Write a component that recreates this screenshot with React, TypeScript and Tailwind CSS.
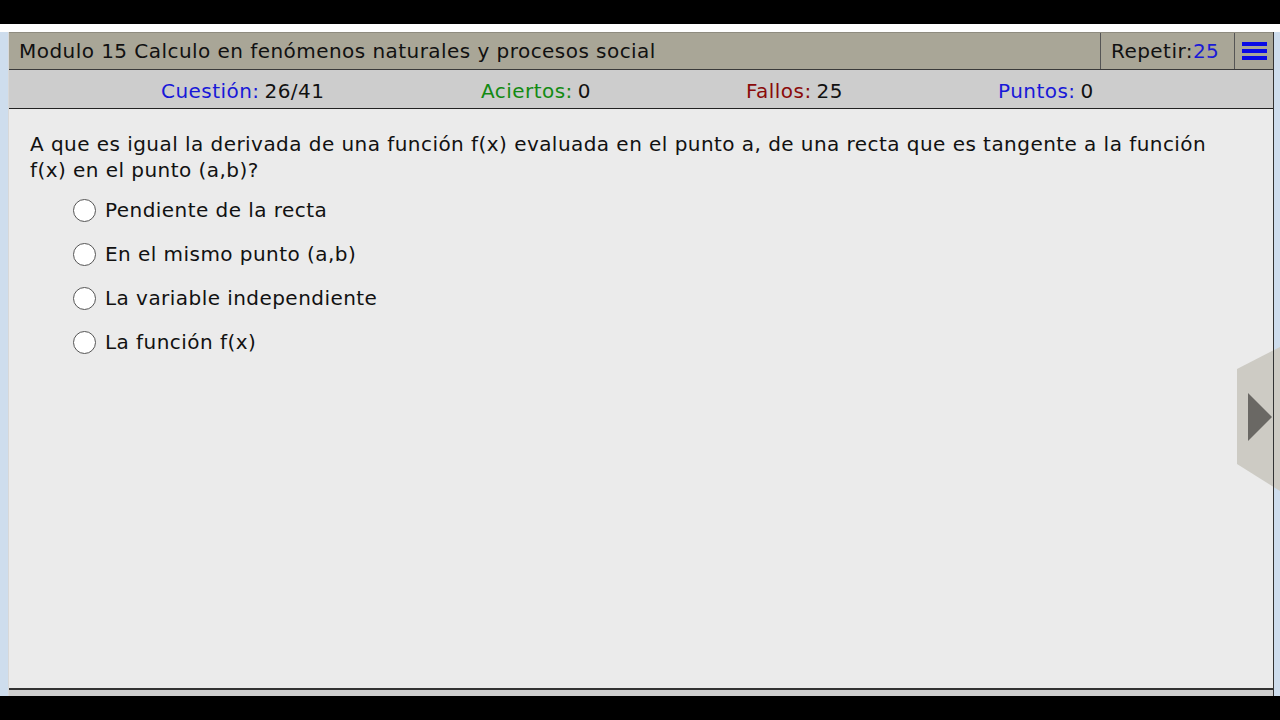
import React from "react";

const options = [
  "Pendiente de la recta",
  "En el mismo punto (a,b)",
  "La variable independiente",
  "La función f(x)",
];

export default function App() {
  return (
    <div className="w-[1280px] h-[720px] bg-black flex flex-col overflow-hidden tracking-[0.45px]" style={{ fontFamily: '"DejaVu Sans", Verdana, sans-serif' }}>
      <div className="h-[24px] shrink-0" />
      <div className="h-[8px] shrink-0 bg-white" />
      <div className="flex flex-1 min-h-0 bg-[#cedded]">
        <div className="w-[8px] shrink-0" />
        <div className="relative flex-1 flex flex-col bg-[#ebebeb] border-l border-[#d8d8d8]">
          {/* header */}
          <div className="h-[38px] shrink-0 flex bg-[#a9a697] border-t border-[#8f8c80] border-b border-b-[#3a3a3a] text-[20px] text-[#111]">
            <div className="flex-1 flex items-center pl-[10px]">Modulo 15 Calculo en fenómenos naturales y procesos social</div>
            <div className="w-[134px] flex items-center pl-[10px] border-l border-[#555]">
              Repetir:<span className="text-[#1a1ad6]">25</span>
            </div>
            <div className="w-[40px] flex items-center justify-center border-l border-[#555]">
              <div className="flex flex-col gap-[3px] w-[25px]">
                <div className="h-[4px] bg-[#0a0ae6]" />
                <div className="h-[4px] bg-[#0a0ae6]" />
                <div className="h-[4px] bg-[#0a0ae6]" />
              </div>
            </div>
          </div>
          {/* stats */}
          <div className="h-[39px] shrink-0 flex items-center pt-[3px] bg-[#cdcdcd] border-b border-[#222] text-[20px] text-[#111] pl-[152px]">
            <div className="w-[320px]"><span className="text-[#1818d8] mr-[5px]">Cuestión:</span>26/41</div>
            <div className="w-[265px]"><span className="text-[#138a13] mr-[5px]">Aciertos:</span>0</div>
            <div className="w-[252px]"><span className="text-[#8a0a0a] mr-[5px]">Fallos:</span>25</div>
            <div><span className="text-[#1818d8] mr-[5px]">Puntos:</span>0</div>
          </div>
          {/* content */}
          <div className="flex-1 pl-[21px] pr-[40px] pt-[22px] text-[20px] leading-[26px] text-[#111]">
            <p>A que es igual la derivada de una función f(x) evaluada en el punto a, de una recta que es tangente a la función f(x) en el punto (a,b)?</p>
            <div className="mt-[14px] pl-[43px] flex flex-col gap-[18px]">
              {options.map((o) => (
                <label key={o} className="flex items-center gap-[9px] h-[26px]">
                  <span className="w-[23px] h-[23px] rounded-full border-[1.5px] border-[#555] bg-white shrink-0" />
                  <span>{o}</span>
                </label>
              ))}
            </div>
          </div>
          <div className="h-[8px] shrink-0 bg-[#cfcfcf] border-t-2 border-[#333]" />

          {/* next arrow */}
          <svg className="absolute right-[-7px] top-[315px]" width="44" height="144" viewBox="0 0 44 144">
            <polygon points="0,22 43,0 43,144 0,117" fill="#cdcbc4" />
            <polygon points="11,46 35,70 11,94" fill="#6a6864" />
          </svg>
          <div className="absolute right-0 top-0 bottom-0 w-px bg-[#333]" />
        </div>
        <div className="w-[6px] shrink-0" />
      </div>
      <div className="h-[24px] shrink-0" />
    </div>
  );
}
